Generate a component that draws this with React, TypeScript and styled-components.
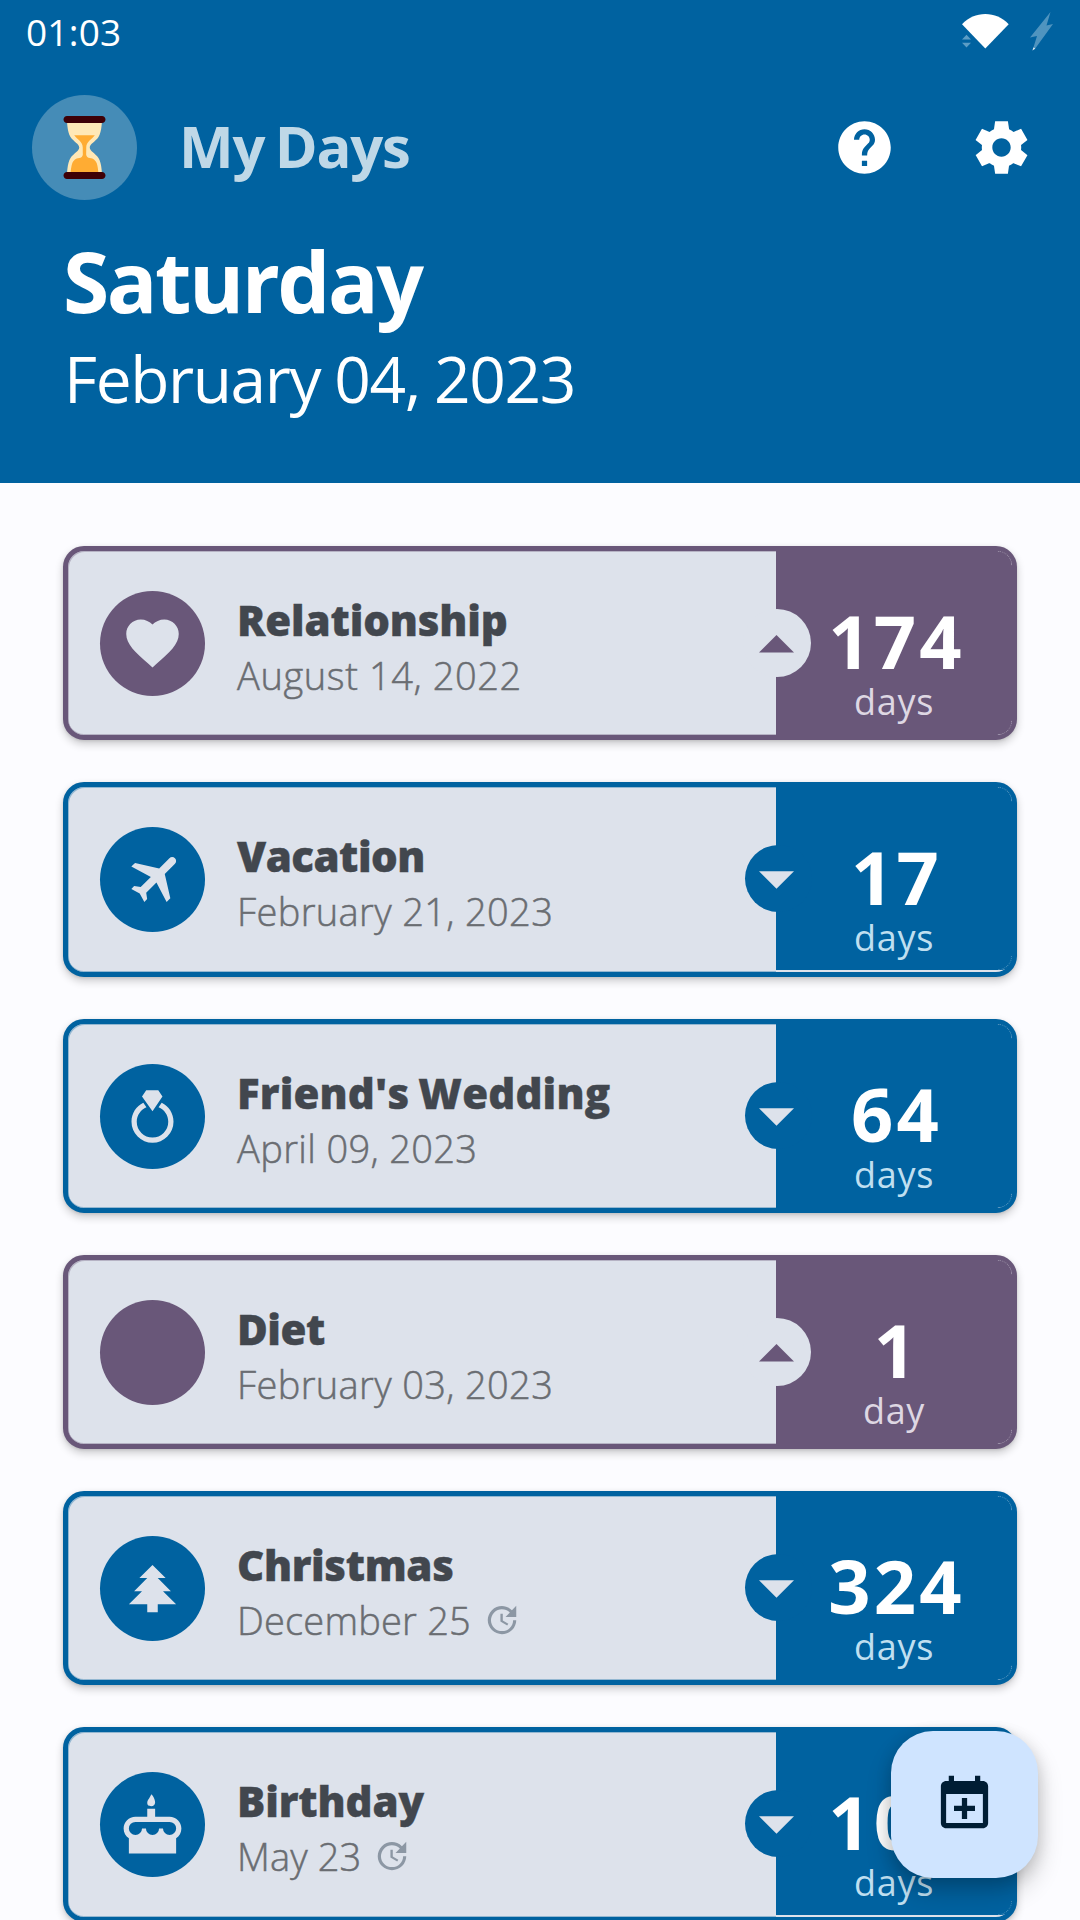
import React from "react";
import styled, { createGlobalStyle } from "styled-components";

const BLUE = "#0062a0";
const PURPLE = "#695779";
const SURFACE = "#dde2eb";

const GlobalStyle = createGlobalStyle`
  *, *::before, *::after { box-sizing: border-box; }
  html, body { margin: 0; padding: 0; background: #fcfcff; }
  body { font-family: "Open Sans", "Noto Sans", sans-serif; overflow: hidden; }
  svg { display: block; flex: none; }
`;

const Screen = styled.main`
  position: relative;
  width: 1080px;
  height: 1920px;
  overflow: hidden;
  background: #fcfcff;
  display: flex;
  flex-direction: column;
`;

const Header = styled.header`
  flex: none;
  height: 483px;
  background: ${BLUE};
  color: #fff;
  display: flex;
  flex-direction: column;
`;

const StatusBar = styled.div`
  height: 63px;
  padding: 0 26px 0 26px;
  display: flex;
  align-items: center;
  justify-content: space-between;
`;

const Clock = styled.span`
  font-size: 37px;
  line-height: 63px;
  letter-spacing: 0.2px;
`;

const StatusIcons = styled.div`
  display: flex;
  align-items: center;
  gap: 21px;
`;

const AppBar = styled.div`
  height: 169px;
  padding: 0 47px 0 32px;
  display: flex;
  align-items: center;
`;

const Logo = styled.div`
  width: 105px;
  height: 105px;
  border-radius: 50%;
  background: #458cb7;
  display: grid;
  place-items: center;
`;

const AppName = styled.h1`
  flex: 1;
  margin: 0 0 3px 42px;
  font-size: 58px;
  font-weight: 700;
  line-height: 80px;
  letter-spacing: -1.3px;
  word-spacing: -3px;
  color: #bfd8e7;
`;

const Actions = styled.div`
  display: flex;
  gap: 74px;
`;

const IconButton = styled.button`
  width: 63px;
  height: 63px;
  padding: 0;
  border: 0;
  background: none;
  color: inherit;
`;

const Today = styled.section`
  padding: 1px 0 0 63px;
`;

const Weekday = styled.div`
  font-size: 84px;
  font-weight: 700;
  line-height: 96px;
  letter-spacing: -2.5px;
`;

const FullDate = styled.div`
  padding: 1px 0 0 1px;
  font-size: 64px;
  line-height: 98px;
  letter-spacing: -1.4px;
  word-spacing: -1px;
`;

const List = styled.ul`
  list-style: none;
  margin: 0;
  padding: 63.1px 63px 0;
  display: flex;
  flex-direction: column;
  gap: 42px;
`;

const Card = styled.li<{ $color: string }>`
  flex: none;
  height: 194.25px;
  border: 5px solid ${(p) => p.$color};
  border-radius: 21px;
  background: ${SURFACE};
  box-shadow: 0 4px 8px rgba(0, 0, 0, 0.2), 0 1px 3px rgba(0, 0, 0, 0.1);
  display: flex;
`;

const Info = styled.div<{ $color: string }>`
  flex: 1;
  display: flex;
  padding: 40px 0 0 32px;
  gap: 32px;
  border-radius: 16px 0 0 16px;
  box-shadow: inset 1px 1px 0 ${(p) => p.$color}55, inset 0 -1px 0 ${(p) => p.$color}55;
`;

const Badge = styled.div<{ $color: string }>`
  width: 105px;
  height: 105px;
  border-radius: 50%;
  background: ${(p) => p.$color};
  color: ${SURFACE};
  display: grid;
  place-items: center;
`;

const Labels = styled.div`
  padding-top: 2px;
`;

const Title = styled.div<{ $spacing: number }>`
  margin-bottom: 1px;
  font-size: 42px;
  font-weight: 800;
  line-height: 54px;
  letter-spacing: ${(p) => p.$spacing}px;
  word-spacing: -2px;
  color: #42474e;
  -webkit-text-stroke: 0.4px #42474e;
  white-space: nowrap;
`;

const DateLine = styled.div<{ $spacing: number }>`
  display: flex;
  align-items: center;
  gap: 12px;
  font-size: 38px;
  font-weight: 300;
  line-height: 54px;
  letter-spacing: ${(p) => p.$spacing}px;
  color: #6a6d72;
  -webkit-text-stroke: 0.5px #6a6d72;
  white-space: nowrap;
`;

const Counter = styled.div<{ $color: string; $short: boolean }>`
  position: relative;
  width: 236px;
  height: ${(p) => (p.$short ? "calc(100% - 2px)" : "100%")};
  padding-top: 50px;
  border-radius: 0 15px ${(p) => (p.$short ? 10 : 15)}px 0;
  background: ${(p) => p.$color};
  text-align: center;

  &::before,
  &::after {
    content: "";
    position: absolute;
    right: 0;
    width: 14px;
    height: 14px;
    border: 0 dotted rgba(255, 255, 255, 0.26);
    border-right-width: 1px;
  }
  &::before {
    top: 0;
    border-top-width: 1px;
    border-top-right-radius: 15px;
  }
  &::after {
    bottom: 0;
    border-bottom-width: 1px;
    border-bottom-right-radius: 15px;
  }
`;

const Notch = styled.div<{ $past: boolean; $color: string }>`
  position: absolute;
  top: 58px;
  left: ${(p) => (p.$past ? -33 : -31)}px;
  width: ${(p) => (p.$past ? 68 : 67)}px;
  height: ${(p) => (p.$past ? 68 : 67)}px;
  border-radius: 50%;
  background: ${(p) => (p.$past ? SURFACE : p.$color)};
  color: ${(p) => (p.$past ? p.$color : SURFACE)};
  display: flex;
  align-items: center;
  padding: ${(p) => (p.$past ? "2px 0 0 16px" : "3px 0 0 14px")};
`;

const Count = styled.div`
  padding-left: 5px;
  font-size: 74px;
  font-weight: 700;
  line-height: 80px;
  letter-spacing: 3.2px;
  color: #fff;
`;

const Unit = styled.div<{ $past: boolean }>`
  font-size: 36px;
  line-height: 42px;
  letter-spacing: 0.7px;
  color: ${(p) => (p.$past ? "#ded7e3" : "#bfdff0")};
`;

const Fab = styled.button`
  position: absolute;
  left: 891px;
  top: 1731px;
  width: 147px;
  height: 147px;
  padding: 0;
  border: 0;
  border-radius: 42px;
  background: #cfe4ff;
  color: #001d34;
  display: grid;
  place-items: center;
  box-shadow: 0 14px 26px rgba(0, 0, 0, 0.2), 0 4px 16px rgba(0, 0, 0, 0.14);
`;

const paths = {
  help: "M12 2C6.48 2 2 6.48 2 12s4.48 10 10 10 10-4.48 10-10S17.52 2 12 2zm1 17h-2v-2h2v2zm2.07-7.75l-.9.92C13.45 12.9 13 13.5 13 15h-2v-.5c0-1.1.45-2.1 1.17-2.83l1.24-1.26c.37-.36.59-.86.59-1.41 0-1.1-.9-2-2-2s-2 .9-2 2H8c0-2.21 1.79-4 4-4s4 1.79 4 4c0 .88-.36 1.68-.93 2.25z",
  settings:
    "M19.44 12.99l-.01.02c.04-.33.08-.67.08-1.01 0-.34-.03-.66-.07-.99l.01.02 2.44-1.92-2.43-4.22-2.87 1.16.01.01c-.52-.4-1.09-.74-1.71-1h.01L14.44 2H9.57l-.44 3.07h.01c-.62.26-1.19.6-1.71 1l.01-.01-2.88-1.17-2.44 4.22 2.44 1.92.01-.02c-.04.33-.07.65-.07.99 0 .34.03.68.08 1.01l-.01-.02-2.1 1.65-.33.26 2.43 4.2 2.88-1.15-.02-.04c.53.41 1.1.75 1.73 1.01h-.03L9.58 22h4.85s.03-.18.06-.42l.38-2.65h-.01c.62-.26 1.2-.6 1.73-1.01l-.02.04 2.88 1.15 2.43-4.2s-.14-.12-.33-.26l-2.11-1.66zM12 15.5c-1.93 0-3.5-1.57-3.5-3.5s1.57-3.5 3.5-3.5 3.5 1.57 3.5 3.5-1.57 3.5-3.5 3.5z",
  heart:
    "M12 21.1l-1.45-1.3C5.4 15.36 2 12.28 2 8.4 2 5.3 4.42 2.85 7.5 2.85c1.74 0 3.41.76 4.5 1.95C13.09 3.61 14.76 2.85 16.5 2.85 19.58 2.85 22 5.3 22 8.4c0 3.88-3.4 6.96-8.55 11.4L12 21.1z",
  plane:
    "M20.56 3.91C21.15 4.5 21.15 5.45 20.56 6.03L16.67 9.92L18.79 19.11L17.38 20.53L13.5 13.1L9.6 17L9.96 19.47L8.89 20.53L7.13 17.35L3.94 15.58L5 14.5L7.5 14.87L11.37 11L3.94 7.09L5.36 5.68L14.55 7.8L18.44 3.91C19 3.33 20 3.33 20.56 3.91Z",
  ring: "M12,10L8,4.4L9.6,2H14.2L15.8,4.4L12,10M15.5,6.8L14.3,8.5C16.5,9.4 18,11.5 18,14A6,6 0 0,1 12,20A6,6 0 0,1 6,14C6,11.5 7.6,9.4 9.7,8.5L8.5,6.8C5.8,8.1 4,10.8 4,14A8,8 0 0,0 12,22A8,8 0 0,0 20,14C20,10.8 18.2,8.1 15.5,6.8Z",
  tree: "M10,21V18H3L8,13H5L10,8H7L12,3L17,8H14L19,13H16L21,18H14V21H10Z",
  cake: "M11.5,0.5C12,0.75 13,2.4 13,3.5C13,4.6 12.33,5 11.5,5C10.67,5 10,4.85 10,3.75C10,2.65 11,2 11.5,0.5M18.5,9C21,9 23,11 23,13.5C23,15.06 22.21,16.43 21,17.24V23H12L3,23V17.24C1.79,16.43 1,15.06 1,13.5C1,11 3,9 5.5,9H10V6H13V9H18.5M12,16A2.5,2.5 0 0,0 14.5,13.5H16A2.5,2.5 0 0,0 18.5,16A2.5,2.5 0 0,0 21,13.5A2.5,2.5 0 0,0 18.5,11H5.5A2.5,2.5 0 0,0 3,13.5A2.5,2.5 0 0,0 5.5,16A2.5,2.5 0 0,0 8,13.5H9.5A2.5,2.5 0 0,0 12,16Z",
  repeat:
    "M21,10.12H14.22L16.96,7.3C14.23,4.6 9.81,4.5 7.08,7.2C4.35,9.91 4.35,14.28 7.08,17C9.81,19.7 14.23,19.7 16.96,17C18.32,15.65 19,14.08 19,12.1H21C21,14.08 20.12,16.65 18.36,18.39C14.85,21.87 9.15,21.87 5.64,18.39C2.14,14.92 2.11,9.28 5.62,5.81C9.13,2.34 14.76,2.34 18.27,5.81L21,3V10.12M12.5,8V12.25L16,14.33L15.28,15.54L11,13V8H12.5Z",
  addEvent:
    "M19 19V8H5V19H19M16 1H18V3H19C20.11 3 21 3.9 21 5V19C21 20.11 20.11 21 19 21H5C3.89 21 3 20.1 3 19V5C3 3.89 3.89 3 5 3H6V1H8V3H16V1M11 9.5H13V12.5H16V14.5H13V17.5H11V14.5H8V12.5H11V9.5Z",
};

type IconName = keyof typeof paths;

const Icon = ({ name, size = 63, color = "currentColor" }: { name: IconName; size?: number; color?: string }) => (
  <svg width={size} height={size} viewBox="0 0 24 24" fill={color}>
    <path d={paths[name]} />
  </svg>
);

const Hourglass = () => (
  <svg width="63" height="63" viewBox="0 0 36 36">
    <path fill="#FFE8B6" d="M21 18c0-2.001 3.246-3.369 5-6 2-3 2-10 2-10H8s0 7 2 10c1.754 2.631 5 3.999 5 6s-3.246 3.369-5 6c-2 3-2 10-2 10h20s0-7-2-10c-1.754-2.631-5-3.999-5-6z" />
    <path fill="#FFAC33" d="M20.999 24c-.999 0-2.057-1-2.057-2C19 20.287 19 19.154 19 18c0-3.22 3.034-4.561 4.9-7H12.1c1.865 2.439 4.9 3.78 4.9 7 0 1.155 0 2.289.058 4 0 1-1.058 2-2.058 2-2 0-3.595 1.784-4 3-1 3-1 7-1 7h16s0-4-1-7c-.405-1.216-2.001-3-4.001-3z" />
    <path fill="#3E0006" d="M30 34c0 1.104-.896 2-2 2H8c-1.104 0-2-.896-2-2s.896-2 2-2h20c1.104 0 2 .896 2 2zm0-32c0 1.104-.896 2-2 2H8c-1.104 0-2-.896-2-2s.896-2 2-2h20c1.104 0 2 .896 2 2z" />
  </svg>
);

const Wifi = () => (
  <svg width="47" height="35" viewBox="0 0 47 35">
    <path fill="#fff" d="M23.3 34.5 0 10.2C6.5 3.6 14.5 0 23.3 0S40.2 3.6 46.7 10.2z" />
    <path fill="#5c9dc5" d="M0 25.5 4.5 20.7 9 25.5zM0 28.7h9l-4.5 4.9z" />
  </svg>
);

const Bolt = () => (
  <svg width="24" height="39" viewBox="0 0 24 39">
    <path fill="#4f94bf" d="M20.5 0 16.5 13.5 23 12 4.5 37.5 2.5 38.5 7 24 0 25.5z" />
    <path fill="#e3eff6" d="M3.4 35.5 5.3 36.2 2.5 38.5z" />
  </svg>
);

const Arrow = ({ up }: { up: boolean }) => (
  <svg width="35" height="18" viewBox="0 0 35 18" fill="currentColor">
    <path d={up ? "M0 17.5 17.5 0 35 17.5z" : "M0 0.3H35L17.5 17.8z"} />
  </svg>
);

interface DayEvent {
  title: string;
  date: string;
  count: number;
  icon?: IconName;
  past?: boolean;
  yearly?: boolean;
  short?: boolean;
  titleSpacing?: number;
  dateSpacing?: number;
}

const events: DayEvent[] = [
  { title: "Relationship", date: "August 14, 2022", count: 174, icon: "heart", past: true, titleSpacing: -0.15, dateSpacing: 0.6 },
  { title: "Vacation", date: "February 21, 2023", count: 17, icon: "plane", short: true, titleSpacing: -0.5 },
  { title: "Friend's Wedding", date: "April 09, 2023", count: 64, icon: "ring", titleSpacing: 0.15 },
  { title: "Diet", date: "February 03, 2023", count: 1, past: true, titleSpacing: -0.5 },
  { title: "Christmas", date: "December 25", count: 324, icon: "tree", yearly: true, titleSpacing: -0.35, dateSpacing: 0.2 },
  { title: "Birthday", date: "May 23", count: 108, icon: "cake", yearly: true, short: true, titleSpacing: -0.1, dateSpacing: 0.1 },
];

const EventCard = ({ event }: { event: DayEvent }) => {
  const past = !!event.past;
  const color = past ? PURPLE : BLUE;
  return (
    <Card $color={color}>
      <Info $color={color}>
        <Badge $color={color}>{event.icon && <Icon name={event.icon} />}</Badge>
        <Labels>
          <Title $spacing={event.titleSpacing ?? -0.2}>{event.title}</Title>
          <DateLine $spacing={event.dateSpacing ?? 0.35}>
            <span>{event.date}</span>
            {event.yearly && <Icon name="repeat" size={38} color="#8c97a4" />}
          </DateLine>
        </Labels>
      </Info>
      <Counter $color={color} $short={!!event.short}>
        <Notch $past={past} $color={color}>
          <Arrow up={past} />
        </Notch>
        <Count>{event.count}</Count>
        <Unit $past={past}>{event.count === 1 ? "day" : "days"}</Unit>
      </Counter>
    </Card>
  );
};

export default function App() {
  return (
    <Screen>
      <GlobalStyle />
      <Header>
        <StatusBar>
          <Clock>01:03</Clock>
          <StatusIcons>
            <Wifi />
            <Bolt />
          </StatusIcons>
        </StatusBar>
        <AppBar>
          <Logo>
            <Hourglass />
          </Logo>
          <AppName>My Days</AppName>
          <Actions>
            <IconButton aria-label="Help">
              <Icon name="help" />
            </IconButton>
            <IconButton aria-label="Settings">
              <Icon name="settings" />
            </IconButton>
          </Actions>
        </AppBar>
        <Today>
          <Weekday>Saturday</Weekday>
          <FullDate>February 04, 2023</FullDate>
        </Today>
      </Header>
      <List>
        {events.map((event) => (
          <EventCard key={event.title} event={event} />
        ))}
      </List>
      <Fab aria-label="Add day">
        <Icon name="addEvent" />
      </Fab>
    </Screen>
  );
}
